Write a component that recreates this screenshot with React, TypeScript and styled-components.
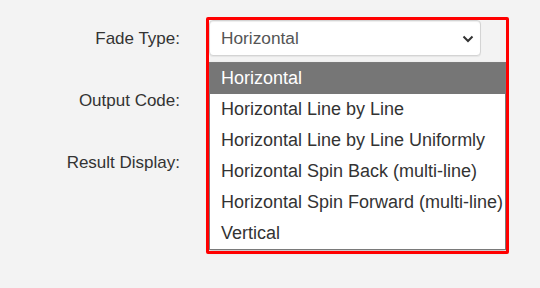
import React, { FC } from 'react';
import styled, { createGlobalStyle } from 'styled-components';

const fadeTypes = [
  'Horizontal',
  'Horizontal Line by Line',
  'Horizontal Line by Line Uniformly',
  'Horizontal Spin Back (multi-line)',
  'Horizontal Spin Forward (multi-line)',
  'Vertical',
];

const GlobalStyle = createGlobalStyle`
  html, body {
    margin: 0;
    padding: 0;
    background: #f3f3f3;
    font-family: 'Liberation Sans', Arial, sans-serif;
  }

  #root {
    min-height: 100vh;
  }
`;

const App: FC = () => {
  const selected = fadeTypes[0];

  return (
    <>
      <GlobalStyle />
      <Page>
        <Form>
          <Label>Fade Type:</Label>
          <SelectWrap>
            <SelectBox>
              <span>{selected}</span>
              <Chevron viewBox="0 0 12 8" aria-hidden>
                <path d="M1.5 1.5 L6 6 L10.5 1.5" />
              </Chevron>
            </SelectBox>

            <OptionList>
              {fadeTypes.map((type) => (
                <Option key={type} active={type === selected}>
                  {type}
                </Option>
              ))}
            </OptionList>

            <Callout />
          </SelectWrap>

          <Label>Output Code:</Label>
          <HiddenControl />

          <Label>Result Display:</Label>
          <HiddenControl />
        </Form>
      </Page>
    </>
  );
};

export default App;

const Page = styled.div`
  min-height: 288px;
  padding-top: 20px;
  box-sizing: border-box;
`;

const Form = styled.div`
  display: grid;
  grid-template-columns: 180px 272px;
  grid-auto-rows: 36px;
  column-gap: 29px;
  row-gap: 26px;
`;

const Label = styled.label`
  justify-self: end;
  align-self: center;
  padding-top: 2px;
  font-size: 17px;
  color: #333;
`;

const SelectWrap = styled.div`
  position: relative;
  z-index: 2;
`;

const SelectBox = styled.div`
  box-sizing: border-box;
  height: 36px;
  display: flex;
  align-items: center;
  justify-content: space-between;
  padding: 0 6px 0 11px;
  background: #fff;
  border: 1px solid #d4d4d4;
  border-radius: 4px;
  box-shadow: inset 0 1px 1px rgba(0, 0, 0, 0.075),
    0 1px 1px rgba(0, 0, 0, 0.06);
  font-size: 17.3px;
  color: #555;
`;

const Chevron = styled.svg`
  width: 12px;
  height: 8px;
  margin-top: 1px;
  fill: none;
  stroke: #333;
  stroke-width: 2;
`;

const OptionList = styled.ul`
  position: absolute;
  top: 42px;
  left: 0;
  box-sizing: border-box;
  width: 297px;
  margin: 0;
  padding: 0;
  list-style: none;
  background: #fff;
  border: 1px solid #7a7a7a;
  box-shadow: 0 2px 4px rgba(0, 0, 0, 0.2);
`;

const Option = styled.li<{ active?: boolean }>`
  height: 31px;
  display: flex;
  align-items: center;
  padding-left: 11px;
  font-size: 18px;
  white-space: nowrap;
  color: ${({ active }) => (active ? '#fff' : '#333')};
  background: ${({ active }) => (active ? '#767676' : 'transparent')};
`;

const Callout = styled.div`
  position: absolute;
  top: -3px;
  left: -3px;
  width: 303px;
  height: 237px;
  box-sizing: border-box;
  border: 3px solid #ff0000;
  border-radius: 2px;
  pointer-events: none;
`;

const HiddenControl = styled.div`
  height: 36px;
  background: #fff;
  border: 1px solid #ccc;
  border-radius: 4px;
  box-sizing: border-box;
`;
